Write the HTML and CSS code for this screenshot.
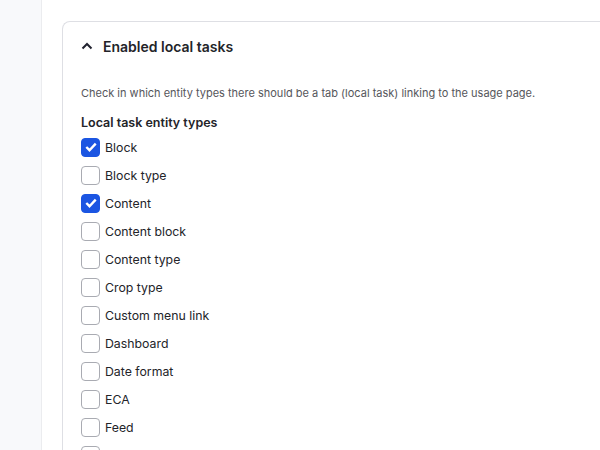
FILE: index.html
```html
<!DOCTYPE html>
<html>
<head>
<meta charset="utf-8">
<link rel="stylesheet" href="styles.css">
</head>
<body>
<div class="layout">
  <aside class="sidebar"></aside>
  <main class="main">
    <section class="card">
      <div class="card-header">
        <svg class="chevron" width="14" height="14" viewBox="0 0 14 14"><path d="M2.5 9.5 L7 5 L11.5 9.5" fill="none" stroke="#222330" stroke-width="2"/></svg>
        <span class="card-title">Enabled local tasks</span>
      </div>
      <div class="card-body">
        <p class="desc">Check in which entity types there should be a tab (local task) linking to the usage page.</p>
        <div class="label">Local task entity types</div>
        <ul class="checks">
          <li><span class="box checked"><svg width="12" height="10" viewBox="0 0 12 10"><path d="M1.3 5 L4.5 8.2 L10.7 1.6" fill="none" stroke="#fff" stroke-width="2.4"/></svg></span>Block</li>
          <li><span class="box"></span>Block type</li>
          <li><span class="box checked"><svg width="12" height="10" viewBox="0 0 12 10"><path d="M1.3 5 L4.5 8.2 L10.7 1.6" fill="none" stroke="#fff" stroke-width="2.4"/></svg></span>Content</li>
          <li><span class="box"></span>Content block</li>
          <li><span class="box"></span>Content type</li>
          <li><span class="box"></span>Crop type</li>
          <li><span class="box"></span>Custom menu link</li>
          <li><span class="box"></span>Dashboard</li>
          <li><span class="box"></span>Date format</li>
          <li><span class="box"></span>ECA</li>
          <li><span class="box"></span>Feed</li>
          <li><span class="box"></span></li>
        </ul>
      </div>
    </section>
  </main>
</div>
</body>
</html>
```
FILE: styles.css
```css
html, body { margin: 0; padding: 0; height: 100%; overflow: hidden; }
body { font-family: Inter, "Noto Sans", sans-serif; color: #232429; background: #fff; }
.layout { display: flex; height: 450px; }
.sidebar { width: 41px; flex: none; background: #f8f9fb; border-right: 1px solid #ebecef; }
.main { flex: 1; padding: 21px 0 0 20px; overflow: hidden; }
.card { border: 1px solid #dedfe4; border-right: none; border-bottom: none; border-radius: 8px 0 0 0; width: 600px; height: 500px; box-sizing: border-box; }
.card-header { display: flex; align-items: center; height: 48px; padding-left: 17px; }
.chevron { margin-right: 9px; }
.card-title { font-size: 14px; font-weight: 600; }
.card-body { padding: 0 0 0 18px; }
.desc { margin: 15px 0 0; font-size: 11px; color: #55565b; line-height: 16px; }
.label { margin-top: 14px; font-size: 12.5px; font-weight: 600; line-height: 16px; }
.checks { list-style: none; margin: 2px 0 0; padding: 0; }
.checks li { display: flex; align-items: center; height: 28px; font-size: 12.3px; }
.box { width: 19px; height: 19px; box-sizing: border-box; border: 1px solid #a9abb2; border-radius: 4px; margin-right: 5px; display: flex; align-items: center; justify-content: center; background: #fff; }
.box.checked { background: #1b55e2; border-color: #1b55e2; }
```
